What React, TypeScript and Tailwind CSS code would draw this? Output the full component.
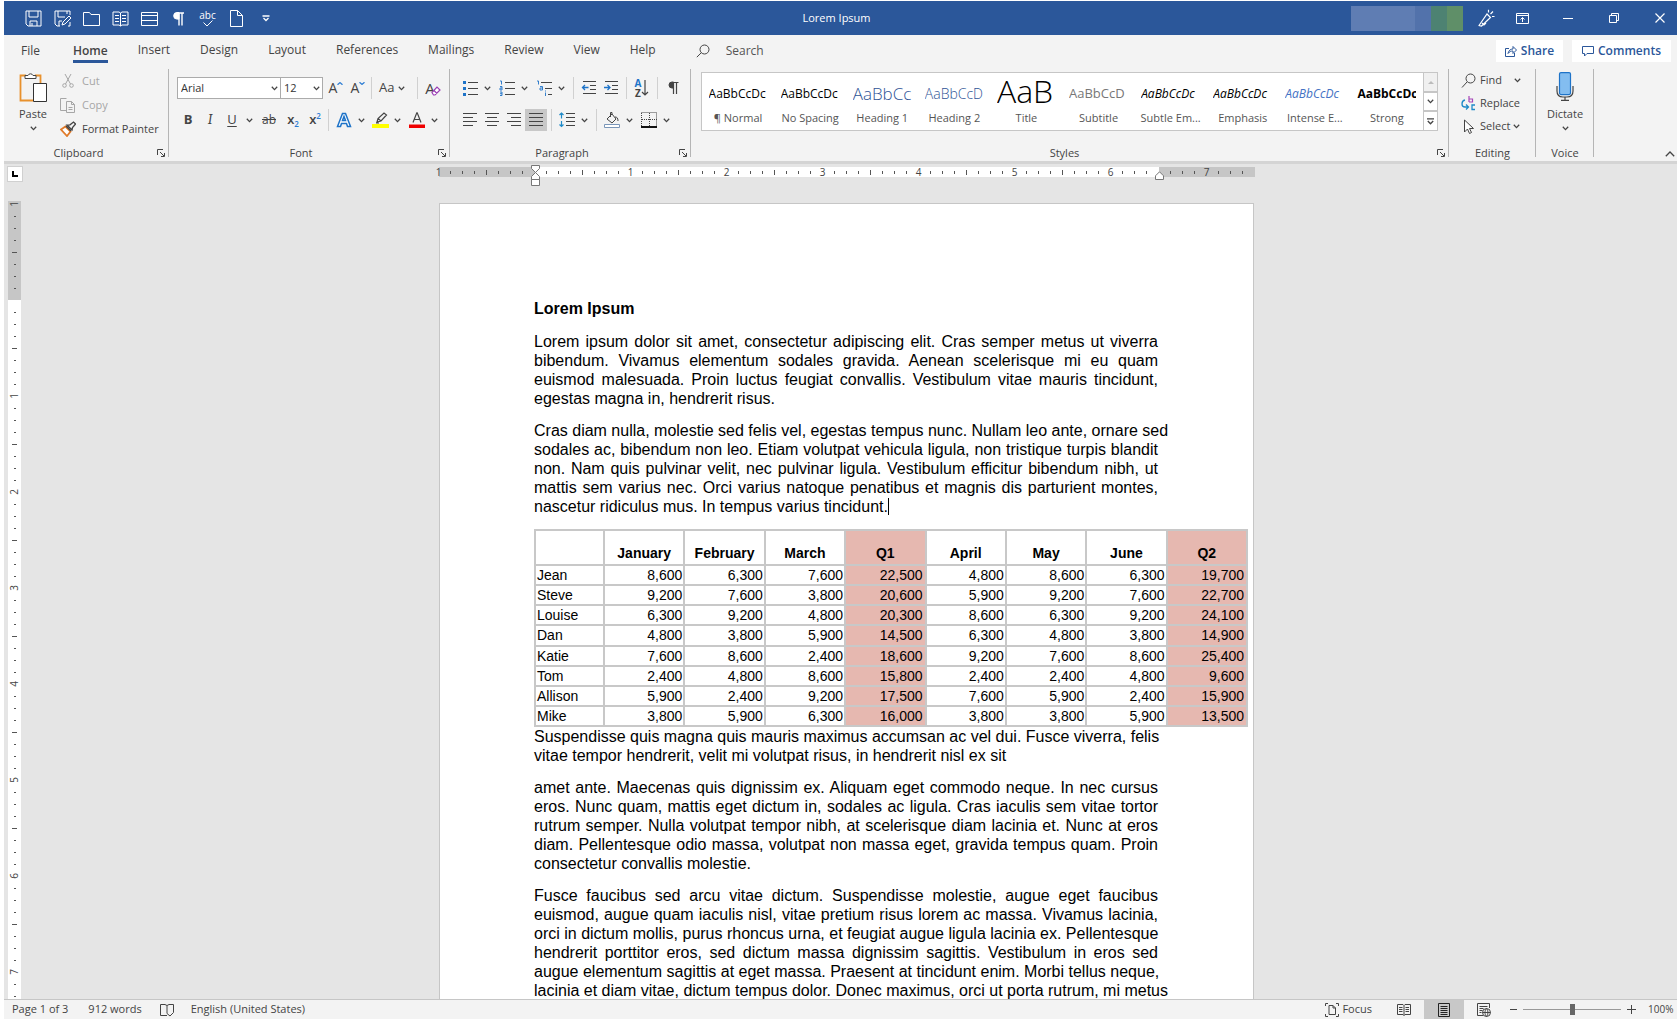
import type { ReactNode } from 'react';

const PROSE_TOP = [
  [
    'Lorem ipsum dolor sit amet, consectetur adipiscing elit. Cras semper metus ut viverra',
    'bibendum. Vivamus elementum sodales gravida. Aenean scelerisque mi eu quam',
    'euismod malesuada. Proin luctus feugiat convallis. Vestibulum vitae mauris tincidunt,',
    'egestas magna in, hendrerit risus.',
  ],
  [
    'Cras diam nulla, molestie sed felis vel, egestas tempus nunc. Nullam leo ante, ornare sed',
    'sodales ac, bibendum non leo. Etiam volutpat vehicula ligula, non tristique turpis blandit',
    'non. Nam quis pulvinar velit, nec pulvinar ligula. Vestibulum efficitur bibendum nibh, ut',
    'mattis sem varius nec. Orci varius natoque penatibus et magnis dis parturient montes,',
    'nascetur ridiculus mus. In tempus varius tincidunt.',
  ],
];

const PROSE_BOTTOM = [
  [
    'Suspendisse quis magna quis mauris maximus accumsan ac vel dui. Fusce viverra, felis',
    'vitae tempor hendrerit, velit mi volutpat risus, in hendrerit nisl ex sit',
  ],
  [
    'amet ante. Maecenas quis dignissim ex. Aliquam eget commodo neque. In nec cursus',
    'eros. Nunc quam, mattis eget dictum in, sodales ac ligula. Cras iaculis sem vitae tortor',
    'rutrum semper. Nulla volutpat tempor nibh, at scelerisque diam lacinia et. Nunc at eros',
    'diam. Pellentesque odio massa, volutpat non massa eget, gravida tempus quam. Proin',
    'consectetur convallis molestie.',
  ],
  [
    'Fusce faucibus sed arcu vitae dictum. Suspendisse molestie, augue eget faucibus',
    'euismod, augue quam iaculis nisl, vitae pretium risus lorem ac massa. Vivamus lacinia,',
    'orci in dictum mollis, purus rhoncus urna, et feugiat augue ligula lacinia ex. Pellentesque',
    'hendrerit porttitor eros, sed dictum massa dignissim sagittis. Vestibulum in eros sed',
    'augue elementum sagittis at eget massa. Praesent at tincidunt enim. Morbi tellus neque,',
    'lacinia et diam vitae, dictum tempus dolor. Donec maximus, orci ut porta rutrum, mi metus',
  ],
];

const COLUMNS = ['January', 'February', 'March', 'Q1', 'April', 'May', 'June', 'Q2'];

const ROWS: [string, string[]][] = [
  ['Jean', ['8,600', '6,300', '7,600', '22,500', '4,800', '8,600', '6,300', '19,700']],
  ['Steve', ['9,200', '7,600', '3,800', '20,600', '5,900', '9,200', '7,600', '22,700']],
  ['Louise', ['6,300', '9,200', '4,800', '20,300', '8,600', '6,300', '9,200', '24,100']],
  ['Dan', ['4,800', '3,800', '5,900', '14,500', '6,300', '4,800', '3,800', '14,900']],
  ['Katie', ['7,600', '8,600', '2,400', '18,600', '9,200', '7,600', '8,600', '25,400']],
  ['Tom', ['2,400', '4,800', '8,600', '15,800', '2,400', '2,400', '4,800', '9,600']],
  ['Allison', ['5,900', '2,400', '9,200', '17,500', '7,600', '5,900', '2,400', '15,900']],
  ['Mike', ['3,800', '5,900', '6,300', '16,000', '3,800', '3,800', '5,900', '13,500']],
];

const STYLES = [
  { name: '¶ Normal', sample: 'AaBbCcDc', look: 'text-xs leading-[27px] text-black' },
  { name: 'No Spacing', sample: 'AaBbCcDc', look: 'text-xs leading-[27px] text-black' },
  { name: 'Heading 1', sample: 'AaBbCc', look: 'text-[17px] leading-[27px] font-light text-[#2f5496]' },
  { name: 'Heading 2', sample: 'AaBbCcD', look: 'text-sm leading-[27px] font-light text-[#2f5496]' },
  { name: 'Title', sample: 'AaB', look: 'text-[32px] leading-[21px] font-light text-black' },
  { name: 'Subtitle', sample: 'AaBbCcD', look: 'text-[13px] leading-[27px] text-[#777]' },
  { name: 'Subtle Em...', sample: 'AaBbCcDc', look: 'text-xs leading-[27px] italic text-black' },
  { name: 'Emphasis', sample: 'AaBbCcDc', look: 'text-xs leading-[27px] italic text-black' },
  { name: 'Intense E...', sample: 'AaBbCcDc', look: 'text-xs leading-[27px] italic text-[#4472c4]' },
  { name: 'Strong', sample: 'AaBbCcDc', look: 'text-xs leading-[27px] font-bold text-black' },
];

const TABS = ['Home', 'Insert', 'Design', 'Layout', 'References', 'Mailings', 'Review', 'View', 'Help'];

interface IconProps {
  children: ReactNode;
  className?: string;
  box?: string;
}

function Icon({ children, className = 'size-4', box = '0 0 16 16' }: IconProps) {
  return (
    <svg viewBox={box} className={`${className} shrink-0`} fill="none" stroke="currentColor" aria-hidden="true">
      {children}
    </svg>
  );
}

function Chevron() {
  return (
    <Icon className="h-[5px] w-[7px]" box="0 0 7 5">
      <path d="M.8.8 3.5 3.6 6.2.8" strokeWidth="1.3" />
    </Icon>
  );
}

function Tool({ label, className = '', children }: { label: string; className?: string; children: ReactNode }) {
  return (
    <button type="button" aria-label={label} className={`flex h-[22px] w-[22px] shrink-0 items-center justify-center ${className}`}>
      {children}
    </button>
  );
}

function Drop({ label }: { label: string }) {
  return (
    <button type="button" aria-label={label} className="flex h-[22px] w-3 shrink-0 items-center justify-center">
      <Chevron />
    </button>
  );
}

function Sep({ className = 'mx-1' }: { className?: string }) {
  return <span className={`h-[22px] w-px shrink-0 bg-[#d0d0d0] ${className}`} />;
}

function Launcher({ label }: { label: string }) {
  return (
    <button type="button" aria-label={label} className="absolute right-1 bottom-1">
      <Icon className="size-2" box="0 0 8 8">
        <path d="M.5 6V.5H6M3 3l4 4M7.5 4v3.5H4" />
      </Icon>
    </button>
  );
}

function Group({ title, className, launcher, children }: { title: string; className: string; launcher?: boolean; children: ReactNode }) {
  return (
    <section aria-label={title} className={`relative flex h-[92px] flex-col ${className}`}>
      <div className="flex-1">{children}</div>
      <div className="h-4 text-center text-[11px] leading-4">{title}</div>
      {launcher && <Launcher label={`${title} settings`} />}
      <span className="absolute top-0 right-0 h-[88px] w-px bg-[#b5b5b5]" />
    </section>
  );
}

function QuickAccess() {
  const item = 'flex w-[29px] items-center justify-center';
  const icon = 'size-[17px]';
  return (
    <div className="flex h-full flex-1 items-stretch">
      <button type="button" aria-label="Save" className={`${item} ml-[15px]`}>
        <Icon className={icon} box="0 0 17 17">
          <path d="M1 1h15v15H3l-2-2zM4 1v6h9V1M5 16v-5h7v5M7 13v3" />
        </Icon>
      </button>
      <button type="button" aria-label="Save as" className={item}>
        <Icon className={icon} box="0 0 17 17">
          <path d="M16 5V1H1v13l2 2h3M4 1v6h7M13 1v3M5 16v-5h3M8 15l1-3 6-6 2 2-6 6zM14 16h2v-4" />
        </Icon>
      </button>
      <button type="button" aria-label="Open" className={item}>
        <Icon className={icon} box="0 0 17 17">
          <path d="M.5 15.5v-13h6l1.5 2h8.5v11z" />
        </Icon>
      </button>
      <button type="button" aria-label="Read mode" className={item}>
        <Icon className={icon} box="0 0 17 17">
          <path d="M1 2h6l1.5 1L10 2h6v13h-6l-1.5 1L7 15H1zM8.5 3v13M3 5.5h4M3 8.5h4M3 11.5h4M10 5.5h4M10 8.5h4M10 11.5h4" />
        </Icon>
      </button>
      <button type="button" aria-label="Table" className={item}>
        <Icon className={icon} box="0 0 17 17">
          <path d="M.5 2.5h16v13H.5zM.5 5.500h16M.5 10.500h16" />
        </Icon>
      </button>
      <button type="button" aria-label="Paragraph marks" className={item}>
        <Icon className={icon} box="0 0 17 17">
          <path d="M9 3.500v12M12 3.500v12M14 3H7" strokeWidth="1.4" />
          <path d="M9 2.500H7a3.300 3.300 0 0 0 0 6.600h2z" fill="currentColor" />
        </Icon>
      </button>
      <button type="button" aria-label="Spelling" className={`${item} flex-col text-[10px] leading-[10px]`}>
        abc
        <Icon className="h-[7px] w-3" box="0 0 12 7">
          <path d="M1.5 2.500 5 6l5.500-5.500" />
        </Icon>
      </button>
      <button type="button" aria-label="New document" className={item}>
        <Icon className={icon} box="0 0 17 17">
          <path d="M2.5.5h7l5 5v11h-12zM9.500.5v5h5" />
        </Icon>
      </button>
      <button type="button" aria-label="Customize toolbar" className={item}>
        <Icon className="h-[7px] w-2" box="0 0 8 7">
          <path d="M.5 1h7M1.500 3 4 5.500 6.500 3" strokeWidth="1.3" />
        </Icon>
      </button>
    </div>
  );
}

function TitleBar() {
  return (
    <header className="flex h-[34px] items-center bg-[#2b579a] text-white">
      <QuickAccess />
      <h1 className="text-[11px]">Lorem Ipsum</h1>
      <div className="flex flex-1 items-center justify-end pr-2">
        <div className="flex h-[25px] w-28">
          <span className="flex-1 bg-[#5f7db3]" />
          <span className="w-4 bg-[#5272ab]" />
          <span className="w-4 bg-[#4d8272]" />
          <span className="w-4 bg-[#5f8f68]" />
        </div>
        <button type="button" aria-label="Coming soon" className="flex w-[46px] justify-center">
          <Icon className="size-[18px]" box="0 0 18 18">
            <path d="M2 16.500 10 5l3.500 3.500L4.500 17l-3-.5zM5 14l2 2 2-2M11.500 3.500V.8M13.500 5l2.500-2.500M15 7.500h2.500" strokeWidth="1.2" />
          </Icon>
        </button>
        <button type="button" aria-label="Ribbon display options" className="flex w-[26px] justify-center">
          <Icon className="h-[11px] w-[13px]" box="0 0 13 11">
            <path d="M.5.5h12v10H.5zM.5 2.500h12M6.500 9V4.500M4.500 6.500l2-2 2 2" />
          </Icon>
        </button>
        <button type="button" aria-label="Minimize" className="ml-2.5 flex w-[46px] justify-center">
          <Icon className="h-2.5 w-2.5" box="0 0 10 10">
            <path d="M0 5.500h10" />
          </Icon>
        </button>
        <button type="button" aria-label="Restore" className="flex w-[46px] justify-center">
          <Icon className="size-2.5" box="0 0 10 10">
            <path d="M.5 2.500h7v7h-7zM2.500 2.500v-2h7v7h-2" />
          </Icon>
        </button>
        <button type="button" aria-label="Close" className="flex w-8 justify-end pr-1">
          <Icon className="size-2.5" box="0 0 10 10">
            <path d="m.5.5 9 9M9.500.5l-9 9" strokeWidth="1.2" />
          </Icon>
        </button>
      </div>
    </header>
  );
}

function TabRow() {
  return (
    <nav className="flex h-[30px] items-center pt-px pr-1.5 pl-[17px] text-xs text-[#444]">
      <button type="button" className="mr-[33px]">File</button>
      <div className="flex gap-[30px]">
        {TABS.map((tab) => (
          <button
            key={tab}
            type="button"
            className={
              tab === 'Home'
                ? 'mt-1 border-b-3 border-[#2b579a] pb-px font-semibold'
                : 'pb-px'
            }
          >
            {tab}
          </button>
        ))}
      </div>
      <label className="ml-10 flex items-center gap-4">
        <Icon className="size-3.5" box="0 0 14 14">
          <circle cx="8.5" cy="5.5" r="4.5" />
          <path d="M5.300 8.700.8 13.200" />
        </Icon>
        <input type="text" aria-label="Search" placeholder="Search" className="w-40 bg-transparent outline-none placeholder:text-[#555]" />
      </label>
      <div className="ml-auto flex gap-[9px] font-semibold text-[#2b579a]">
        <button type="button" className="flex h-[22px] w-[67px] items-center justify-center gap-1 bg-white">
          <Icon className="size-3" box="0 0 12 12">
            <path d="M4 3.500H.5v8h9V8M3 8.500c.5-3 2.500-4.500 5-4.500V1.500l3.500 3.500L8 8.500V6C6 6 4.500 6.500 3 8.500z" />
          </Icon>
          Share
        </button>
        <button type="button" className="flex h-[22px] w-[99px] items-center justify-center gap-1 bg-white">
          <Icon className="size-3" box="0 0 12 12">
            <path d="M.5 1.500h11v7H5L2.500 11V8.500h-2z" />
          </Icon>
          Comments
        </button>
      </div>
    </nav>
  );
}

function ClipboardGroup() {
  const row = 'flex h-6 items-center gap-1.5 whitespace-nowrap';
  return (
    <Group title="Clipboard" launcher className="w-[165px] pr-4">
      <div className="flex">
        <button type="button" className="flex w-[54px] shrink-0 flex-col items-center pt-0.5 pl-1 text-[11px] leading-4">
          <Icon className="h-8 w-7" box="0 0 28 32">
            <path d="M7 4.500H1.500v25H14M16 4.500h5.500V12" stroke="#e8912d" strokeWidth="1.8" />
            <path d="M6 7.500V4.500h3a2.700 2.700 0 0 1 5 0h3v3z" fill="#fff" />
            <path d="M14.500 12.500h13v18h-13z" fill="#fff" stroke="#333" />
          </Icon>
          <span className="mt-[3px]">Paste</span>
          <span className="mt-1 mb-1"><Chevron /></span>
        </button>
        <div className="pl-0.5 text-[11px]">
          <button type="button" disabled className={`${row} text-[#a6a6a6]`}>
            <Icon className="mx-px size-3.5" box="0 0 14 14">
              <path d="M4 0l5.500 10M10 0 4.500 10" />
              <circle cx="3.5" cy="11.5" r="1.8" />
              <circle cx="10.5" cy="11.5" r="1.8" />
            </Icon>
            Cut
          </button>
          <button type="button" disabled className={`${row} text-[#a6a6a6]`}>
            <Icon>
              <path d="M6 13.500H.5V1.500h6M6.500 4.500h5l3 3v8h-8zM11.500 4.500v3h3M8.500 10.500h4M8.500 12.500h4" />
            </Icon>
            Copy
          </button>
          <button type="button" className={row}>
            <Icon>
              <path d="M1 8.500 5.500 5.500l5 5L7 15z" fill="#fff" stroke="#e07b2a" strokeWidth="1.8" />
              <path d="m6 5 5 5M7 4l5 5 .5-2.500L15.500 3 13.500 1 10 3.800z" strokeWidth="1.3" />
            </Icon>
            Format Painter
          </button>
        </div>
      </div>
    </Group>
  );
}

function Combo({ label, value, options, className }: { label: string; value: string; options: string[]; className: string }) {
  return (
    <span className={`relative flex h-[22px] shrink-0 ${className}`}>
      <select aria-label={label} defaultValue={value} className="w-full appearance-none border border-[#ababab] bg-white pl-[3px] text-[11px] text-[#333]">
        {options.map((o) => (
          <option key={o}>{o}</option>
        ))}
      </select>
      <span className="pointer-events-none absolute top-[9px] right-[3px]"><Chevron /></span>
    </span>
  );
}

function FontGroup() {
  return (
    <Group title="Font" launcher className="w-[281px] pr-[17px]">
      <div className="flex flex-col gap-2.5 pt-2 pl-2">
        <div className="flex items-center">
          <Combo label="Font name" value="Arial" options={['Arial', 'Calibri', 'Cambria']} className="w-[104px]" />
          <Combo label="Font size" value="12" options={['10', '11', '12', '14']} className="-ml-px w-[43px]" />
          <Tool label="Grow font" className="ml-0.5 text-sm">
            <span>A</span>
            <Icon className="mb-2.5 h-[3px] w-1.5" box="0 0 6 3"><path d="M.5 2.800 3 .6l2.500 2.200" stroke="#2b7cd3" strokeWidth="1.2" /></Icon>
          </Tool>
          <Tool label="Shrink font" className="text-sm">
            <span>A</span>
            <Icon className="mb-2.5 h-[3px] w-1.5" box="0 0 6 3"><path d="M.5.2 3 2.400 5.500.2" stroke="#2b7cd3" strokeWidth="1.2" /></Icon>
          </Tool>
          <Sep className="mr-[7px] ml-0.5" />
          <button type="button" aria-label="Change case" className="flex w-8 shrink-0 items-center gap-1 text-[13px]">
            <span>Aa</span>
            <Chevron />
          </button>
          <Sep className="mr-1 ml-1.5" />
          <Tool label="Clear formatting" className="text-[15px]">
            <span>A</span>
            <Icon className="mt-1.5 -ml-1 size-2.5" box="0 0 10 10"><path d="M1 6.500 6 1l3 3-5 5H2.500zM3 4.500l3 3" stroke="#9b3fb5" strokeWidth="1.2" fill="#fff" /></Icon>
          </Tool>
        </div>
        <div className="flex items-center">
          <Tool label="Bold" className="text-[13px] font-bold">B</Tool>
          <Tool label="Italic" className="font-serif text-sm italic">I</Tool>
          <Tool label="Underline" className="text-[13px] underline underline-offset-2">U</Tool>
          <Drop label="Underline styles" />
          <Tool label="Strikethrough" className="ml-[3px] text-xs line-through">ab</Tool>
          <Tool label="Subscript" className="ml-0.5 text-[13px] font-semibold">
            x<span className="mt-2 text-[8px] text-[#2b7cd3]">2</span>
          </Tool>
          <Tool label="Superscript" className="text-[13px] font-semibold">
            x<span className="mb-2 text-[8px] text-[#2b7cd3]">2</span>
          </Tool>
          <Sep className="mr-1 ml-0.5" />
          <Tool label="Text effects">
            <Icon>
              <path d="M1.500 14.500 6.500 1.500h3l5 13h-3l-1-3h-5l-1 3zM6.500 8.500h3L8 4.500z" fill="#fff" stroke="#1e73c8" strokeWidth="1.5" />
            </Icon>
          </Tool>
          <Drop label="Text effect options" />
          <Tool label="Text highlight color" className="ml-0.5">
            <Icon className="h-4 w-[17px]" box="0 0 17 16">
              <path d="M0 12h17v4H0z" fill="#ffff00" stroke="none" />
              <path d="m5 10 1-3.500L12 1l2.500 2L9 9zM4 11h3M6 6.500 9 9" strokeWidth="1.2" />
            </Icon>
          </Tool>
          <Drop label="Highlight colors" />
          <Tool label="Font color" className="ml-[3px]">
            <Icon>
              <path d="M0 12.500h16v3.500H0z" fill="#f00000" stroke="none" />
              <path d="M4 10.500 7.800.8h.4L12 10.500M5.300 7.500h5.400" strokeWidth="1.2" />
            </Icon>
          </Tool>
          <Drop label="Font colors" />
        </div>
      </div>
    </Group>
  );
}

function ParagraphGroup() {
  return (
    <Group title="Paragraph" launcher className="w-[241px] pr-[17px]">
      <div className="flex flex-col gap-2.5 pt-2 pl-[9px]">
        <div className="flex items-center">
          <Tool label="Bullets">
            <Icon>
              <path d="M6 2.500h10M6 8.500h10M6 14.500h10" />
              <path d="M1 1h3v3H1zM1 7h3v3H1zM1 13h3v3H1z" fill="#1e73c8" stroke="none" />
            </Icon>
          </Tool>
          <Drop label="Bullet library" />
          <Tool label="Numbering" className="ml-[3px]">
            <Icon>
              <path d="M6 2.500h10M6 8.500h10M6 14.500h10" />
              <path d="M1 1h1.500v3.500M1 6.500h2v3.500H1v-2h2M1 12h2v3.500H1M1 13.700h2" stroke="#1e73c8" strokeWidth=".9" />
            </Icon>
          </Tool>
          <Drop label="Numbering library" />
          <Tool label="Multilevel list" className="ml-[3px]">
            <Icon>
              <path d="M5 2.500h11M9 8.500h7M12 14.500h4" />
              <path d="M1 1h1.500v3.500M4 6.500h2.500v3.500H4v-2h2.500M9.500 12.500v3.500M9.500 10.500v1" stroke="#1e73c8" strokeWidth=".9" />
            </Icon>
          </Tool>
          <Drop label="List library" />
          <Sep className="mr-1 ml-1.5" />
          <Tool label="Decrease indent">
            <Icon>
              <path d="M2 1.500h13M9 5.500h6M9 9.500h6M2 13.500h13" />
              <path d="M7.500 7.500H1.500M4 5 1.500 7.500 4 10" stroke="#1e73c8" strokeWidth="1.3" />
            </Icon>
          </Tool>
          <Tool label="Increase indent">
            <Icon>
              <path d="M2 1.500h13M9 5.500h6M9 9.500h6M2 13.500h13" />
              <path d="M1 7.500h6M4.500 5 7 7.500 4.500 10" stroke="#1e73c8" strokeWidth="1.3" />
            </Icon>
          </Tool>
          <Sep />
          <Tool label="Sort">
            <span className="flex flex-col text-[10px] leading-[10px] font-bold">
              <span className="text-[#1e73c8]">A</span>
              <span>Z</span>
            </span>
            <Icon className="h-4 w-2" box="0 0 8 16">
              <path d="M4 0v15M1 12l3 3 3-3" strokeWidth="1.2" />
            </Icon>
          </Tool>
          <Sep />
          <Tool label="Show paragraph marks">
            <Icon className="size-3.5" box="0 0 14 14">
              <path d="M7.500 1.500V13M10.500 1.500V13M12.500 1.500H6" strokeWidth="1.2" />
              <path d="M7.500 1H6a3 3 0 0 0 0 6h1.500z" fill="currentColor" />
            </Icon>
          </Tool>
        </div>
        <div className="flex items-center">
          <Tool label="Align left">
            <Icon><path d="M1 1.500h14M1 5.500h10M1 9.500h14M1 13.500h10" /></Icon>
          </Tool>
          <Tool label="Center">
            <Icon><path d="M1 1.500h14M3 5.500h10M1 9.500h14M3 13.500h10" /></Icon>
          </Tool>
          <Tool label="Align right">
            <Icon><path d="M1 1.500h14M5 5.500h10M1 9.500h14M5 13.500h10" /></Icon>
          </Tool>
          <Tool label="Justify" className="bg-[#c8c8c8]">
            <Icon><path d="M1 1.500h14M1 5.500h14M1 9.500h14M1 13.500h14" /></Icon>
          </Tool>
          <Sep />
          <Tool label="Line spacing">
            <Icon>
              <path d="M7 1.500h9M7 5.500h9M7 9.500h9M7 13.500h9" />
              <path d="M2.500 1v5.500M2.500 9v5.500M.5 3l2-2 2 2M.5 12.500l2 2 2-2" stroke="#1e8ac8" strokeWidth="1.2" />
            </Icon>
          </Tool>
          <Drop label="Spacing options" />
          <Sep className="mr-1 ml-1.5" />
          <Tool label="Shading">
            <Icon>
              <path d="M.5 12.500h15v3H.5z" fill="#fff" stroke="#7a96b8" />
              <path d="M3 7 8 2l4 5-4 4zM8 2V.5H6.500V5M11 5c2 0 3 1 3 4" />
            </Icon>
          </Tool>
          <Drop label="Shading colors" />
          <Tool label="Borders" className="ml-[3px]">
            <Icon>
              <path d="M.5.5h15v14M.5 1v14M8.500 1v14M1 7.500h15" strokeDasharray="1 1" />
              <path d="M0 15h16" strokeWidth="2" stroke="#111" />
            </Icon>
          </Tool>
          <Drop label="Border options" />
        </div>
      </div>
    </Group>
  );
}

function StylesGroup() {
  const scroll = 'flex flex-1 items-center justify-center border border-[#c6c6c6]';
  return (
    <Group title="Styles" launcher className="min-w-0 flex-1 pr-[11px]">
      <div className="mt-[3px] ml-2.5 flex h-[59px] border border-[#c6c6c6] bg-white">
        <div className="grid flex-1 grid-cols-10">
          {STYLES.map(({ name, sample, look }) => (
            <button key={name} type="button" className="flex min-w-0 flex-col items-center gap-[3px] pt-[7px]">
              <span className={`block h-[27px] w-[59px] overflow-hidden text-left whitespace-nowrap ${look}`}>
                {sample}
              </span>
              <span className="text-[11px] leading-4 whitespace-nowrap text-[#555]">{name}</span>
            </button>
          ))}
        </div>
        <div className="-my-px -mr-px flex w-[15px] flex-col">
          <button type="button" aria-label="Scroll up" className={`${scroll} bg-[#f0f0f0] text-[#bbb]`}>
            <Icon className="h-1 w-1.5" box="0 0 6 4"><path d="M0 4 3 1l3 3z" fill="currentColor" stroke="none" /></Icon>
          </button>
          <button type="button" aria-label="Scroll down" className={scroll}>
            <Chevron />
          </button>
          <button type="button" aria-label="More styles" className={scroll}>
            <Icon className="size-[7px]" box="0 0 7 7"><path d="M0 .8h7M.8 3l2.700 2.800L6.200 3" strokeWidth="1.3" /></Icon>
          </button>
        </div>
      </div>
    </Group>
  );
}

function EditingGroup() {
  const row = 'flex h-[22px] items-center text-[11px]';
  return (
    <Group title="Editing" className="w-[87px]">
      <div className="flex flex-col gap-px pl-3">
        <button type="button" className={row}>
          <Icon className="mr-1 size-[15px]" box="0 0 15 15">
            <circle cx="9.5" cy="5.5" r="4.5" />
            <path d="m6 9-5 5.500" />
          </Icon>
          Find
          <span className="ml-3"><Chevron /></span>
        </button>
        <button type="button" className={row}>
          <Icon className="mr-1 size-[15px]" box="0 0 15 15">
            <path d="M8 0v6M8 6h3.500V3H8" stroke="#a546b8" strokeWidth="1.2" />
            <path d="M14 9h-3v4.500h3M4 4C0 5 0 11 4 11h3M5 8.500 7.500 11 5 13.500" stroke="#1e8ac8" strokeWidth="1.3" />
          </Icon>
          Replace
        </button>
        <button type="button" className={row}>
          <Icon className="mr-1 size-[15px]" box="0 0 15 15">
            <path d="M3.500 1v12l3-3 2 4.500 2-1-2-4h4z" fill="#fff" />
          </Icon>
          Select
          <span className="ml-[3px]"><Chevron /></span>
        </button>
      </div>
    </Group>
  );
}

function Ribbon() {
  return (
    <div className="flex border-b-3 border-[#d4d4d4] pt-1 text-[#444]">
      <ClipboardGroup />
      <FontGroup />
      <ParagraphGroup />
      <StylesGroup />
      <EditingGroup />
      <Group title="Voice" className="w-[58px]">
        <button type="button" className="flex w-full flex-col items-center pt-[3px] text-[11px] leading-4">
          <Icon className="h-[29px] w-[18px]" box="0 0 18 29">
            <path d="M1 14v5q0 6 6 6h4q6 0 6-6v-5M9 25v3M5 28.300h8" strokeWidth="1.2" />
            <rect x="3.5" y=".6" width="11" height="22" rx="1.5" fill="#83bdf0" stroke="#1e73c8" strokeWidth="1.2" />
          </Icon>
          <span className="mt-[5px]">Dictate</span>
          <span className="mt-1"><Chevron /></span>
        </button>
      </Group>
      <div className="flex w-[83px] items-end justify-end pr-0.5 pb-1">
        <button type="button" aria-label="Collapse ribbon">
          <Icon className="h-1.5 w-2.5" box="0 0 10 6">
            <path d="M.8 5.200 5 1l4.200 4.200" strokeWidth="1.3" />
          </Icon>
        </button>
      </div>
    </div>
  );
}

// One cell per eighth of an inch; `start` is the eighth the ruler opens on.
function rulerCells(start: number, count: number) {
  return Array.from({ length: count }, (_, i) => start + i);
}

function HorizontalRuler() {
  return (
    <div className="relative h-2.5 w-[828px] shrink-0 bg-[linear-gradient(to_right,transparent_6px,#c6c6c6_6px,#c6c6c6_102px,white_102px,white_726px,#c6c6c6_726px,#c6c6c6_822px,transparent_822px)]">
      <div className="flex h-full text-[10px] leading-[10px] text-[#444]">
        {rulerCells(-8, 68).map((n) => (
          <span key={n} className="flex w-3 items-center justify-center">
            {n % 8 === 0 ? (
              n !== 0 && Math.abs(n / 8)
            ) : n === 52 ? null : n % 4 === 0 ? (
              <span className="h-[5px] w-px bg-[#555]" />
            ) : (
              <span className="h-[3px] w-px bg-[#555]" />
            )}
          </span>
        ))}
      </div>
      <svg viewBox="0 0 9 22" className="absolute -top-0.5 left-[98px] h-[22px] w-[9px]" fill="#fff" stroke="#777" aria-hidden="true">
        <path d="M.5.5h8v3l-4 4-4-4zM4.500 7.500l4 4v3h-8v-3zM.5 14.500h8v6h-8z" />
      </svg>
      <svg viewBox="0 0 9 9" className="absolute top-1 left-[722px] h-[9px] w-[9px]" fill="#fff" stroke="#777" aria-hidden="true">
        <path d="m4.500.8 4 4v3.700h-8V4.800z" />
      </svg>
    </div>
  );
}

function VerticalRuler() {
  return (
    <div className="ml-1 flex w-[13px] flex-col bg-[linear-gradient(to_bottom,transparent_3px,#c6c6c6_3px,#c6c6c6_102px,white_102px)] text-[10px] leading-[13px] text-[#444]">
      {rulerCells(-8, 68).map((n) => (
        <span key={n} className="flex h-3 shrink-0 items-center justify-center">
          {n % 8 === 0 ? (
            n !== 0 && <span className="rotate-180 [writing-mode:vertical-rl]">{Math.abs(n / 8)}</span>
          ) : n % 4 === 0 ? (
            <span className="h-px w-[5px] bg-[#555]" />
          ) : (
            <span className="h-px w-0.5 bg-[#555]" />
          )}
        </span>
      ))}
    </div>
  );
}

function Paragraph({ lines, caret }: { lines: string[]; caret?: boolean }) {
  return (
    <p className="mb-[13px] w-[624px] whitespace-nowrap">
      {lines.map((line, i) => {
        const last = i === lines.length - 1;
        return (
          <span key={line} className={last && lines.length < 6 ? 'block' : 'block [text-align-last:justify]'}>
            {line}
            {last && caret && <span className="inline-block h-[17px] w-px bg-black align-text-bottom" />}
          </span>
        );
      })}
    </p>
  );
}

function SalesTable() {
  const edge = 'border-2 border-[#c8c8c8]';
  return (
    <table className="h-[198px] w-[714px] table-fixed border-collapse text-sm leading-4">
      <colgroup>
        <col className="w-[69px]" />
        {COLUMNS.map((c) => (
          <col key={c} />
        ))}
      </colgroup>
      <thead>
        <tr className="h-[35px]">
          <td className={edge} />
          {COLUMNS.map((c) => (
            <th key={c} scope="col" className={`${edge} pb-[3px] align-bottom font-bold ${c[0] === 'Q' ? 'bg-[#e6b8b0]' : ''}`}>
              {c}
            </th>
          ))}
        </tr>
      </thead>
      <tbody>
        {ROWS.map(([name, values]) => (
          <tr key={name}>
            <th scope="row" className={`${edge} pl-px text-left font-normal`}>{name}</th>
            {values.map((v, i) => (
              <td key={COLUMNS[i]} className={`${edge} text-right ${COLUMNS[i][0] === 'Q' ? 'bg-[#e6b8b0] pr-0.5' : 'pr-px'}`}>
                {v}
              </td>
            ))}
          </tr>
        ))}
      </tbody>
    </table>
  );
}

function Workspace() {
  return (
    <main className="flex min-h-0 flex-1 overflow-hidden bg-[#e5e5e5]">
      <div className="flex w-5 shrink-0 flex-col gap-4 pt-0.5">
        <button type="button" aria-label="Tab selector" className="ml-[3px] flex size-4 shrink-0 items-center justify-center border border-[#d0d0d0] bg-white">
          <Icon className="size-1.5" box="0 0 6 6"><path d="M1 0v5h5" strokeWidth="2" /></Icon>
        </button>
        <VerticalRuler />
      </div>
      <div className="flex min-w-0 flex-1 flex-col items-center pt-[3px] pr-2">
        <HorizontalRuler />
        <article className="mt-[26px] w-[815px] shrink-0 border border-[#c6c6c6] bg-white pt-[95px] pl-[94px] font-['Liberation_Sans',Arial,sans-serif] text-base leading-[19px] text-black">
          <h2 className="mb-3.5 font-bold">Lorem Ipsum</h2>
          <Paragraph lines={PROSE_TOP[0]} />
          <Paragraph lines={PROSE_TOP[1]} caret />
          <SalesTable />
          {PROSE_BOTTOM.map((lines) => (
            <Paragraph key={lines[0]} lines={lines} />
          ))}
        </article>
      </div>
    </main>
  );
}

function StatusBar() {
  return (
    <footer className="flex h-5 shrink-0 items-center border-t border-[#c6c6c6] bg-[#f3f3f3] pl-2 text-[11px] text-[#444]">
      <span>Page 1 of 3</span>
      <span className="ml-5">912 words</span>
      <button type="button" aria-label="Proofing" className="ml-[18px]">
        <Icon className="h-3.5 w-3.5" box="0 0 14 14">
          <path d="M7 12.500H.5v-11H5l2 1 2-1h4.500v8L10 13l-3-2.500V2.500" />
        </Icon>
      </button>
      <button type="button" className="ml-[17px]">English (United States)</button>
      <div className="ml-auto flex h-full items-center">
        <button type="button" className="mr-3 flex items-center gap-[3px]">
          <Icon className="h-3.5 w-3.5" box="0 0 14 14">
            <path d="M3 .5H.5V3M11 .5h2.500V3M.5 11v2.500H3M13.500 11v2.500H11M4 2.500h4l2.500 2.500v6.500H4zM8 2.500V5h2.500" />
          </Icon>
          Focus
        </button>
        <button type="button" aria-label="Read mode" className="flex h-full w-10 items-center justify-center">
          <Icon className="h-3 w-3.5" box="0 0 14 12">
            <path d="M.5.5H6l1 1 1-1h5.500v10H8l-1 1-1-1H.5zM7 1.500v10M2 3.500h3.500M2 5.500h3.500M2 7.500h3.500M8.500 3.500H12M8.500 5.500H12M8.500 7.500H12" />
          </Icon>
        </button>
        <button type="button" aria-label="Print layout" className="flex h-full w-10 items-center justify-center bg-[#c8c8c8] text-[#222]">
          <Icon className="h-3.5 w-3" box="0 0 12 14">
            <path d="M.5.5h11v13H.5zM2.500 3.500h7M2.500 5.500h7M2.500 7.500h7M2.500 9.500h7M2.500 11.500h7" />
          </Icon>
        </button>
        <button type="button" aria-label="Web layout" className="flex h-full w-10 items-center justify-center">
          <Icon className="h-3.5 w-3.5" box="0 0 14 14">
            <path d="M6 12.500H.5V.5h12V5M2.500 3.500h8M2.500 5.500h4M2.500 7.500h3M2.500 9.500h2" />
            <circle cx="9.5" cy="9.5" r="4" />
            <path d="M5.500 9.500h8M9.500 5.500c-2 2-2 6 0 8 2-2 2-6 0-8" />
          </Icon>
        </button>
        <button type="button" aria-label="Zoom out" className="ml-1.5">
          <Icon className="h-[9px] w-[7px]" box="0 0 7 9"><path d="M0 4.500h7" /></Icon>
        </button>
        <input
          type="range"
          aria-label="Zoom"
          defaultValue={50}
          className="mx-1.5 h-3 w-[98px] appearance-none bg-[linear-gradient(#999,#999)] bg-size-[100%_1px] bg-center bg-no-repeat [&::-webkit-slider-thumb]:h-[11px] [&::-webkit-slider-thumb]:w-[5px] [&::-webkit-slider-thumb]:appearance-none [&::-webkit-slider-thumb]:bg-[#666]"
        />
        <button type="button" aria-label="Zoom in">
          <Icon className="h-[9px] w-[9px]" box="0 0 9 9"><path d="M0 4.500h9M4.500 0v9" /></Icon>
        </button>
        <span className="ml-3 w-[29px] text-[10px]">100%</span>
      </div>
    </footer>
  );
}

export default function App() {
  return (
    <div className="flex h-screen flex-col overflow-hidden bg-white pt-px pl-1 font-['Open_Sans','Noto_Sans',sans-serif]">
      <TitleBar />
      <div className="bg-[#f3f3f3]">
        <TabRow />
        <Ribbon />
      </div>
      <Workspace />
      <StatusBar />
    </div>
  );
}
